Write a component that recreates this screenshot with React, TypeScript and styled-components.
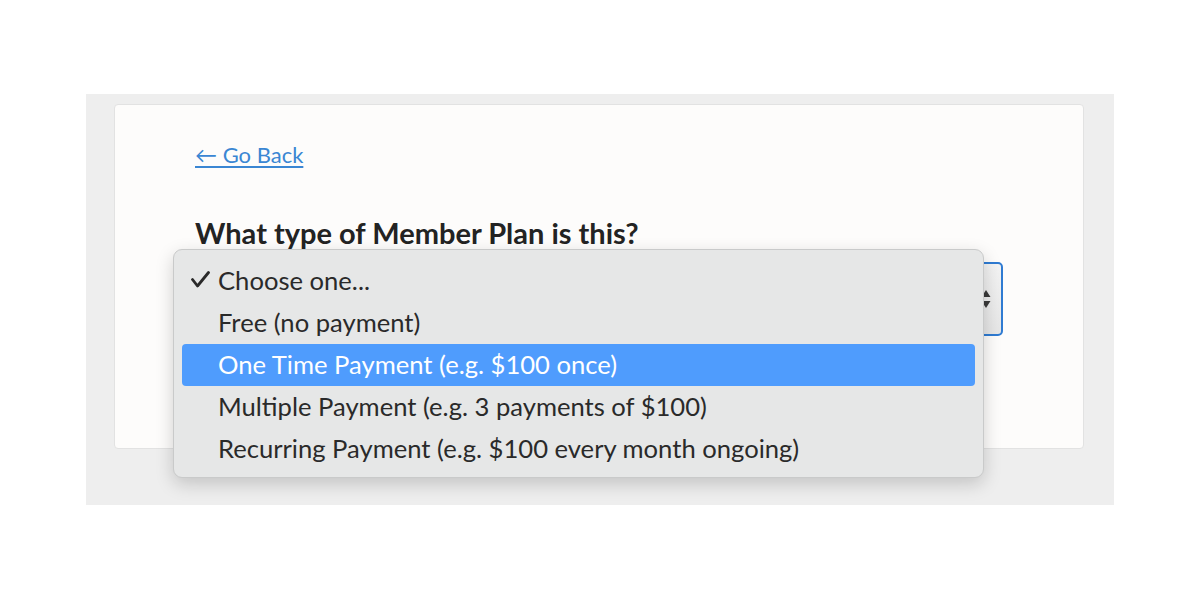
import React from "react";
import styled, { createGlobalStyle } from "styled-components";

const Global = createGlobalStyle`
  html, body { margin: 0; padding: 0; background: #ffffff; }
  body { font-family: Lato, "Open Sans", sans-serif; }
`;

const Page = styled.div`
  width: 1200px;
  height: 600px;
  padding-top: 94px;
  box-sizing: border-box;
`;

const Backdrop = styled.div`
  margin-left: 86px;
  width: 1028px;
  height: 411px;
  background: #eeeeee;
  padding: 10px 30px 0 28px;
  box-sizing: border-box;
`;

const Card = styled.div`
  height: 345px;
  background: #fdfcfb;
  border: 1px solid #e2e2e2;
  border-radius: 4px;
  box-sizing: border-box;
  padding: 34px 80px 0 80px;
  display: flex;
  flex-direction: column;
`;

const BackLink = styled.a`
  align-self: flex-start;
  font-size: 22px;
  line-height: 32px;
  color: #3a86d3;
  text-decoration: underline;
  text-underline-offset: 3px;
  text-decoration-thickness: 1.5px;
  cursor: pointer;
`;

const Question = styled.h2`
  margin: 44px 0 0 0;
  font-size: 29px;
  line-height: 36px;
  font-weight: 700;
  color: #232323;
`;

const SelectWrap = styled.div`
  position: relative;
  margin-top: 11px;
`;

const SelectBox = styled.div`
  height: 74px;
  border: 2px solid #2f7bd2;
  border-radius: 5px;
  box-sizing: border-box;
  background: linear-gradient(#f3f3f3, #e6e6e6);
  display: flex;
  align-items: center;
  justify-content: flex-end;
  padding-right: 10px;
`;

const Menu = styled.ul`
  position: absolute;
  left: -22px;
  top: -13px;
  width: 811px;
  margin: 0;
  padding: 10px 0 7px 0;
  list-style: none;
  background: #e6e7e7;
  border: 1px solid #c9caca;
  border-radius: 9px;
  box-sizing: border-box;
  box-shadow: 0 6px 18px rgba(0, 0, 0, 0.18);
`;

const Item = styled.li<{ $active?: boolean }>`
  position: relative;
  height: 42px;
  margin: 0 8px;
  padding: 0 0 2px 36px;
  box-sizing: border-box;
  display: flex;
  align-items: center;
  font-size: 25.6px;
  color: ${(p) => (p.$active ? "#ffffff" : "#2a2a2a")};
  background: ${(p) => (p.$active ? "#4f9cfd" : "transparent")};
  border-radius: 4px;
`;

const Check = styled.svg`
  position: absolute;
  left: 9px;
  top: 11px;
`;

const Arrows = () => (
  <svg width="10" height="22" viewBox="0 0 10 22">
    <path d="M5 2 L9.5 9 L0.5 9 Z" fill="#3a3a3a" />
    <path d="M5 20 L9.5 13 L0.5 13 Z" fill="#3a3a3a" />
  </svg>
);

const options = [
  "Choose one...",
  "Free (no payment)",
  "One Time Payment (e.g. $100 once)",
  "Multiple Payment (e.g. 3 payments of $100)",
  "Recurring Payment (e.g. $100 every month ongoing)",
];

export default function App() {
  return (
    <Page>
      <Global />
      <Backdrop>
        <Card>
          <BackLink>← Go Back</BackLink>
          <Question>What type of Member Plan is this?</Question>
          <SelectWrap>
            <SelectBox>
              <Arrows />
            </SelectBox>
            <Menu>
              {options.map((o, i) => (
                <Item key={o} $active={i === 2}>
                  {i === 0 && (
                    <Check width="19" height="17" viewBox="0 0 19 17">
                      <path
                        d="M1.5 8.5 L6.5 15 L17.5 1.5"
                        fill="none"
                        stroke="#2a2a2a"
                        strokeWidth="2.8"
                        strokeLinecap="round"
                        strokeLinejoin="round"
                      />
                    </Check>
                  )}
                  {o}
                </Item>
              ))}
            </Menu>
          </SelectWrap>
        </Card>
      </Backdrop>
    </Page>
  );
}
